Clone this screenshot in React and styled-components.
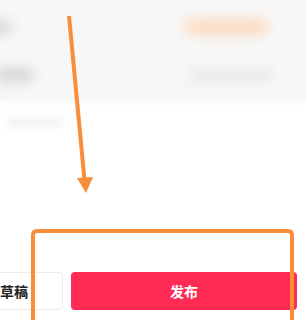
import React from 'react';
import styled, { createGlobalStyle } from 'styled-components';

const GlobalStyle = createGlobalStyle`
  html, body {
    margin: 0;
    padding: 0;
    background: #ffffff;
  }
  body {
    font-family: "Noto Sans CJK SC", "Noto Sans", sans-serif;
  }
`;

const Page = styled.div`
  position: relative;
  width: 306px;
  height: 320px;
  overflow: hidden;
  display: flex;
  flex-direction: column;
  background: #ffffff;
`;

const Settings = styled.div`
  background: #f7f7f7;
  display: flex;
  flex-direction: column;
  padding-bottom: 4px;
  box-shadow: 0 4px 8px #fbfbfb;
`;

const SettingRow = styled.div`
  height: ${(p) => p.$height}px;
  display: flex;
  align-items: center;
  justify-content: space-between;
`;

const Blob = styled.div`
  width: ${(p) => p.$w}px;
  height: ${(p) => p.$h}px;
  margin-left: ${(p) => p.$ml || 0}px;
  margin-right: ${(p) => p.$mr || 0}px;
  border-radius: ${(p) => p.$h / 2}px;
  background: ${(p) => p.$color};
  filter: blur(${(p) => p.$blur || 3}px);
`;

const NoteRow = styled.div`
  height: 44px;
  display: flex;
  align-items: center;
  padding-left: 6px;
`;

const Spacer = styled.div`
  flex: 1;
`;

const Footer = styled.div`
  display: flex;
  gap: 8px;
  margin-left: -49px;
  padding: 0 9px 10px 0;
`;

const DraftButton = styled.button`
  width: 112px;
  height: 38px;
  flex-shrink: 0;
  border: 1px solid #ebebeb;
  border-radius: 4px;
  background: #ffffff;
  color: #222222;
  font-family: "Noto Sans CJK SC", sans-serif;
  font-size: 14px;
  font-weight: 700;
  padding: 0;
`;

const PublishButton = styled.button`
  flex: 1;
  height: 38px;
  border: none;
  border-radius: 4px;
  background: #fe2c55;
  color: #ffffff;
  font-family: "Noto Sans CJK SC", sans-serif;
  font-size: 14px;
  font-weight: 700;
  padding: 0;
`;

const Annotation = styled.svg`
  position: absolute;
  left: 0;
  top: 0;
  width: 306px;
  height: 320px;
  pointer-events: none;
`;

const ORANGE = '#f98d3a';

export default function App() {
  return (
    <>
      <GlobalStyle />
      <Page>
        <Settings>
          <SettingRow $height={54}>
            <Blob $w={30} $h={14} $ml={-18} $color="#d9d9d9" $blur={6} />
            <Blob $w={84} $h={16} $mr={38} $color="#fcdcc2" $blur={6} />
          </SettingRow>
          <SettingRow $height={42}>
            <Blob $w={40} $h={14} $ml={-6} $color="#d6d6d6" $blur={6} />
            <Blob $w={82} $h={11} $mr={34} $color="#e6e6e6" $blur={6} />
          </SettingRow>
        </Settings>
        <NoteRow>
          <Blob $w={56} $h={7} $color="#eeeeee" $blur={4} />
        </NoteRow>
        <Spacer />
        <Footer>
          <DraftButton>存草稿</DraftButton>
          <PublishButton>发布</PublishButton>
        </Footer>
        <Annotation viewBox="0 0 306 320">
          <line x1="69" y1="16" x2="84.5" y2="180" stroke={ORANGE} strokeWidth="4" />
          <polygon points="77,178 93,177 86,193" fill={ORANGE} />
          <path
            d="M33 330 V235 Q33 231 37 231 H288 Q292 231 292 235 V330"
            fill="none"
            stroke={ORANGE}
            strokeWidth="4"
          />
        </Annotation>
      </Page>
    </>
  );
}
